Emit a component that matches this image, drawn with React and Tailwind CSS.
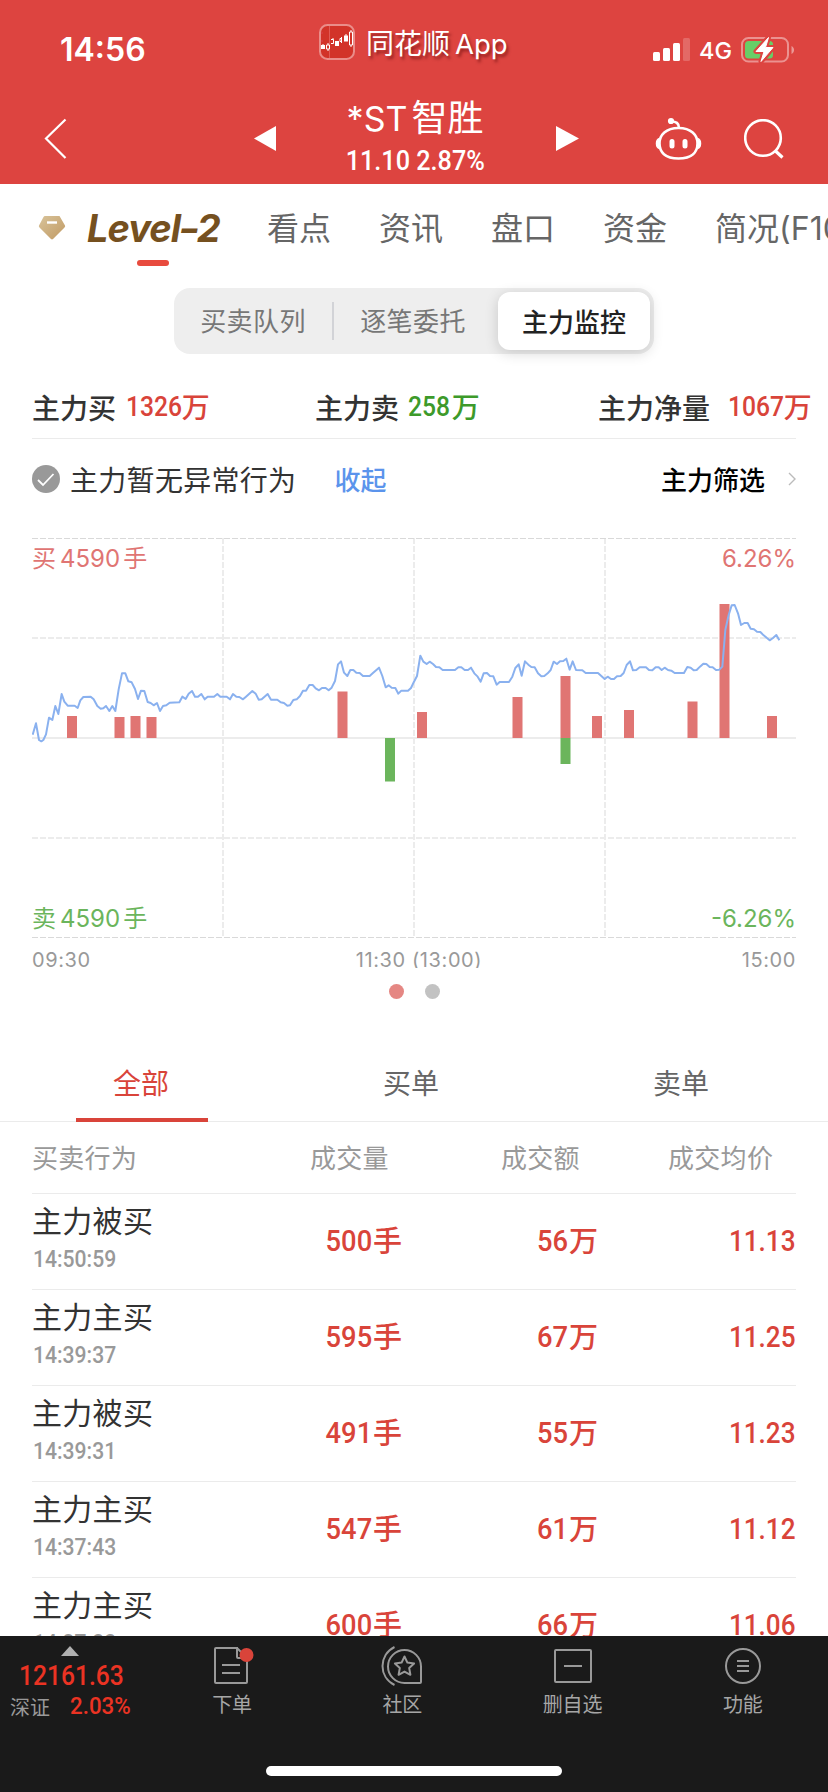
import React from 'react';

const stats = [
    { label: '主力买', value: '1326', color: 'text-[#d9443a]', gap: '-mr-2 ml-[10px]' },
    { label: '主力卖', value: '258', color: 'text-[#3d9a2a]', gap: '-mr-1 ml-[9px]' },
    { label: '主力净量', value: '1067', color: 'text-[#d9443a]', gap: '-mr-2 ml-[18px]' },
];

const orders = [
    { action: '主力被买', time: '14:50:59', volume: '500', amount: '56', price: '11.13' },
    { action: '主力主买', time: '14:39:37', volume: '595', amount: '67', price: '11.25' },
    { action: '主力被买', time: '14:39:31', volume: '491', amount: '55', price: '11.23' },
    { action: '主力主买', time: '14:37:43', volume: '547', amount: '61', price: '11.12' },
    { action: '主力主买', time: '14:37:22', volume: '600', amount: '66', price: '11.06' },
];

// x and height of each bar, in chart pixels
const buyBars = [
    [35, 22], [82.5, 21], [98.5, 22], [114.5, 21], [305.5, 46.5], [385, 26], [480.5, 41],
    [528.5, 62], [560, 22], [592, 28], [655.5, 36.5], [687.5, 134], [735, 22],
];
const sellBars = [[353, 43.5], [528.5, 26]];

// price curve, in thirds of a pixel
const priceLine =
    '98,404 108,370 117,420 124,424 130,420 138,403 147,353 157,360 166,318 175,342 185,282 193,305 203,317 224,317 233,324 241,301 250,291 272,290 281,298 292,318 302,326 310,325 318,318 328,333 337,318 346,333 356,268 366,220 376,220 385,244 395,247 405,267 414,297 423,272 433,273 443,306 452,309 461,316 471,309 480,333 489,318 499,316 509,308 538,307 547,290 557,297 566,281 576,273 585,290 594,290 604,282 614,298 623,290 642,290 652,282 661,290 680,290 690,298 699,282 709,290 718,291 729,298 738,290 757,273 767,281 776,299 785,298 803,282 813,299 832,299 842,307 852,309 862,317 870,316 880,300 890,298 900,288 909,272 918,272 928,255 938,255 947,265 957,271 966,264 977,264 986,271 995,263 1005,243 1014,193 1023,184 1032,218 1042,228 1051,210 1060,210 1069,218 1079,219 1089,228 1109,228 1118,220 1137,203 1147,228 1157,262 1166,256 1175,263 1186,264 1195,281 1204,272 1224,272 1233,264 1242,245 1251,228 1261,167 1270,185 1280,192 1289,185 1299,192 1308,201 1318,202 1328,210 1365,210 1375,202 1384,202 1394,210 1404,210 1413,203 1423,220 1433,230 1442,245 1451,220 1461,219 1470,228 1480,229 1490,254 1499,246 1527,246 1537,230 1546,204 1556,193 1565,227 1575,184 1585,194 1594,201 1604,202 1614,220 1624,229 1633,228 1643,220 1652,210 1661,185 1671,192 1680,184 1690,183 1699,176 1709,209 1718,184 1728,210 1747,211 1757,219 1794,219 1804,228 1814,237 1823,230 1833,237 1842,237 1851,229 1862,228 1871,219 1880,195 1890,184 1899,211 1909,210 1919,202 1938,202 1947,210 1957,211 1967,202 1976,202 1985,210 1994,203 2004,210 2014,212 2024,219 2052,219 2062,201 2072,203 2081,211 2090,210 2100,200 2110,191 2119,192 2129,201 2138,202 2148,210 2158,209 2167,200 2176,90 2186,45 2195,16 2204,15 2214,40 2223,75 2233,69 2243,69 2252,86 2262,88 2271,95 2281,96 2291,106 2309,121 2319,114 2329,105 2338,121';

const Num = ({ children, className = '' }) => (
    <span className={`inline-block font-['Roboto'] font-medium ${className}`}>{children}</span>
);

const StatusBar = () => (
    <div className="relative h-[84px]">
        <div className="flex h-[100px] items-center justify-between pl-[60px] pr-[33px]">
            <span className="font-['Inter'] text-[32px] font-semibold leading-none">14:56</span>
            <div className="flex items-center">
                <svg width="38" height="24" viewBox="0 0 38 24" fill="#fff">
                    <rect x="0" y="14" width="7" height="9" rx="1.5" />
                    <rect x="10" y="10" width="7" height="13" rx="1.5" />
                    <rect x="20" y="5" width="7" height="18" rx="1.5" />
                    <rect x="30" y="0" width="7" height="23" rx="1.5" opacity=".2" />
                </svg>
                <span className="ml-2 mt-0.5 font-['Inter'] text-[23.5px] font-medium leading-none">4G</span>
                <svg className="ml-[9px]" width="54" height="28" viewBox="0 0 54 28" fill="none">
                    <rect x="1" y="2" width="46" height="23.5" rx="6.5" stroke="#fff" strokeOpacity=".42" strokeWidth="2" />
                    <path d="M50.5 10c3.4 1.5 3.4 6.5 0 8z" fill="#fff" fillOpacity=".45" />
                    <rect x="4" y="5" width="28" height="17.5" rx="3.5" fill="#68ce67" />
                    <path d="M27.5 1.5 15 15.5h8L20 25.5 32 11.5h-7.5z" fill="#fff" stroke="#dd4440" strokeWidth="5" strokeLinejoin="round" />
                    <path d="M27.5 1.5 15 15.5h8L20 25.5 32 11.5h-7.5z" fill="#fff" stroke="#fff" strokeLinejoin="round" />
                </svg>
            </div>
        </div>
        <div className="absolute left-[319px] top-6 flex items-start">
            <svg width="36" height="36" viewBox="0 0 36 36">
                <rect x="1" y="1" width="34" height="34" rx="7.5" fill="#d23329" stroke="#ea8d89" strokeWidth="2" />
                <path d="M10.5 2v32" stroke="#e05a54" />
                <path d="M2.5 9h1M2.5 17h1" stroke="#e58" strokeWidth=".8" />
                <path d="M2 21h4v4H2zM16 17h4v5h-4zM25 11.5h4v6h-4z" fill="#fff" />
                <path d="M7.5 21h3v4h-3zM9 19v2M9 25v2M12 15.5h2.5v4H12M14 14v1.5M22.5 14.5H21v3h1.5M22.5 13v6M30.5 8h3v13h-3zM32 6v2M32 21v2M4 20v1M27 10v2" fill="none" stroke="#fff" />
            </svg>
            <span className="ml-[11px] mt-0.5 whitespace-nowrap font-['Inter','Noto_Sans_CJK_SC',sans-serif] text-[28px] leading-9 [text-shadow:2px_3px_3px_rgba(80,0,0,.5)]">
                同花顺<span className="ml-[5px] text-[27.5px]">App</span>
            </span>
        </div>
    </div>
);

const TitleBar = () => (
    <div className="flex h-[100px] items-start pt-5">
        <svg className="ml-11 mt-[14px]" width="24" height="42" viewBox="0 0 24 42" fill="none" stroke="#fff" strokeWidth="2.2">
            <path d="M21.5 1.5 2 20.5l19.5 19.5" />
        </svg>
        <svg className="ml-[186px] mt-[22px]" width="22" height="25" viewBox="0 0 22 25" fill="#fff">
            <path d="M22 0v25L0 12.5z" />
        </svg>
        <div className="flex w-[278px] flex-col items-center whitespace-nowrap">
            <div className="-mt-[5px] font-['Inter','Noto_Sans_CJK_SC',sans-serif] text-[34px] leading-[38px]">
                *ST<span className="ml-1 text-[36px]">智胜</span>
            </div>
            <Num className="mt-[5px] scale-x-[0.9] text-[28px] leading-9">11.10 2.87%</Num>
        </div>
        <svg className="ml-0.5 mt-[22px]" width="23" height="25" viewBox="0 0 23 25" fill="#fff">
            <path d="M0 0v25l23-12.5z" />
        </svg>
        <svg className="ml-[76px] mt-[13px]" width="48" height="44" viewBox="0 0 48 44" fill="none" stroke="#fff" strokeWidth="2.6">
            <path d="M23.500 11C36 11 42.500 18 42.500 26.500S37 41.500 23.500 41.500 4.500 35 4.500 26.500 11 11 23.500 11z" />
            <path d="M4.500 21.500c-4 1-4 9 0 10M42.500 21.500c4 1 4 9 0 10" fill="#fff" strokeWidth="1.500" />
            <path d="M24 11c0-5-3-6.5-7.5-6.5" />
            <circle cx="16" cy="4" r="1.8" fill="#fff" />
            <path d="M17 24.500v4.5M30 24.500v4.5" strokeWidth="5" strokeLinecap="round" />
        </svg>
        <svg className="ml-[41px] mt-[15px]" width="40" height="41" viewBox="0 0 40 41" fill="none" stroke="#fff" strokeWidth="2.6">
            <circle cx="19" cy="19" r="17.8" />
            <path d="m31.5 32 7 6.5" strokeWidth="3.2" />
        </svg>
    </div>
);

const TopTabs = () => (
    <div className="relative flex h-[104px] items-start overflow-hidden whitespace-nowrap pl-[36px] pt-[21px]">
        <svg className="mt-[8px] shrink-0" width="34" height="34" viewBox="0 0 34 34">
            <defs>
                <linearGradient id="gem" x1="0" y1="0" x2="1" y2="1">
                    <stop offset="0" stopColor="#d8c39a" />
                    <stop offset="1" stopColor="#c19a63" />
                </linearGradient>
            </defs>
            <path d="M9 3h14.5l5.5 9.5q.5 1-.5 2L17 26q-1 .8-2 0L3.5 14.5q-1-1-.5-2L7.5 4Q8 3 9 3z" fill="url(#gem)" />
            <path d="M11 9.5h10" stroke="#fff" strokeWidth="2.4" />
        </svg>
        <span className="ml-[17px] w-[132px] shrink-0 origin-left font-['Inter'] text-[38px] font-bold italic leading-[46px] tracking-[-1px] text-[#75501f]">
            Level<span className="inline-block scale-x-[1.25]">-</span>2
        </span>
        <div className="ml-12 flex shrink-0 gap-12 font-['Inter','Noto_Sans_CJK_SC',sans-serif] text-[32px] leading-[48px] text-[#666]">
            <span>看点</span>
            <span>资讯</span>
            <span>盘口</span>
            <span>资金</span>
            <span>简况(F10)</span>
        </div>
        <div className="absolute left-[137px] top-[76px] h-1.5 w-8 rounded-[3px] bg-[#e84b3e]" />
    </div>
);

const Segment = () => (
    <div className="mx-auto flex h-[66px] w-[480px] items-center rounded-2xl bg-[#eeeeee] text-[26px] text-[#777]">
        <span className="w-[158px] pb-1 text-center tracking-[0.4px]">买卖队列</span>
        <span className="h-[38px] w-0.5 bg-[#d2d3d7]" />
        <span className="w-[158px] pb-1 text-center tracking-[0.4px]">逐笔委托</span>
        <span className="ml-1.5 flex h-[58px] w-[152px] items-center justify-center rounded-xl bg-white pb-0.5 font-medium text-[#222] shadow-[0_3px_14px_rgba(0,0,0,.16)]">
            主力监控
        </span>
    </div>
);

const Stats = () => (
    <div className="mx-8 flex h-[85px] items-center border-b border-[#ebebeb] pt-[22px] text-[28px]">
        {stats.map((s) => (
            <div key={s.label} className="flex w-[283px] shrink-0 items-center whitespace-nowrap">
                <span className="font-medium text-[#333]">{s.label}</span>
                <Num className={`mb-px origin-left scale-x-[0.88] ${s.gap} ${s.color}`}>{s.value}</Num>
                <span className={`mb-[3px] font-medium ${s.color}`}>万</span>
            </div>
        ))}
    </div>
);

const Chart = () => (
    <div className="relative mx-8 h-[400px] font-['Inter','Noto_Sans_CJK_SC',sans-serif] text-[24px] leading-[30px]">
        <svg className="block" width="764" height="402" viewBox="0 0 764 402" fill="none">
            <g stroke="#ececec" strokeWidth="2">
                <path d="M191 0v400M382 0v400M573 0v400M0 100h764M0 300h764" strokeDasharray="6 2" />
                <path d="M0 200h764" />
            </g>
            <path d="M0 .5h764M0 399.5h764" stroke="#d9d9d9" strokeDasharray="6 2" />
            {buyBars.map(([x, h]) => (
                <rect key={x} x={x} y={200 - h} width="10" height={h} fill="#e07573" />
            ))}
            {sellBars.map(([x, h]) => (
                <rect key={x} x={x} y="200" width="10" height={h} fill="#6bb55c" />
            ))}
            <g transform="translate(-32 62) scale(.33333)">
                <polyline points={priceLine} stroke="#8ab1ef" strokeWidth="6" strokeLinejoin="round" />
            </g>
        </svg>
        <div className="absolute inset-x-0 top-[6px] flex justify-between text-[#e07573]">
            <span>买<span className="ml-1 mr-[3px]">4590</span>手</span>
            <span>6.26%</span>
        </div>
        <div className="absolute inset-x-0 bottom-[4px] flex justify-between text-[#6bb55c]">
            <span>卖<span className="ml-1 mr-[3px]">4590</span>手</span>
            <span>-6.26%</span>
        </div>
    </div>
);

const OrderRow = ({ order }) => (
    <div className="flex h-24 shrink-0 border-b border-[#ebebeb]">
        <div className="w-[220px]">
            <div className="mt-[5px] text-[30px] leading-[40px] tracking-[0.3px] text-[#333]">{order.action}</div>
            <Num className="ml-px mt-1 origin-left scale-x-[0.88] align-top text-[24px] leading-[32px] text-[#999]">{order.time}</Num>
        </div>
        <div className="flex flex-1 items-center pb-1 text-[29px] font-medium text-[#d9443a]">
            <div className="flex w-[150px] items-center justify-end">
                <Num className="mt-px origin-right scale-x-[0.91] text-[30px]">{order.volume}</Num>
                <span className="ml-px">手</span>
            </div>
            <div className="flex w-[196px] items-center justify-end">
                <Num className="mt-px origin-right scale-x-[0.91] text-[30px]">{order.amount}</Num>
                <span className="ml-px">万</span>
            </div>
            <div className="flex flex-1 justify-end">
                <Num className="mt-px origin-right scale-x-[0.87] text-[30px]">{order.price}</Num>
            </div>
        </div>
    </div>
);

const NavItem = ({ label, children }) => (
    <div className="flex flex-1 flex-col items-center pt-2">
        <svg width="44" height="44" viewBox="0 0 44 44" fill="none" stroke="#999" strokeWidth="2">
            {children}
        </svg>
        <span className="mt-[1px] text-[20px] leading-[30px] text-[#a6a6a6]">{label}</span>
    </div>
);

const BottomBar = () => (
    <div className="h-[156px] shrink-0 bg-[#1a1a1a]">
        <div className="flex h-[130px]">
            <div className="w-[147px] text-[#eb3323]">
                <svg className="ml-[61px] mt-[10px] block" width="18" height="10" viewBox="0 0 18 10">
                    <path d="M9 0l9 10H0z" fill="#b0b0b0" />
                </svg>
                <Num className="ml-[19px] mt-[2px] block origin-left scale-x-[0.88] text-[28px] leading-9">12161.63</Num>
                <div className="-mt-1 flex items-center pl-[10px]">
                    <span className="mt-0.5 text-[20px] leading-[30px] text-[#999]">深证</span>
                    <Num className="ml-5 origin-left scale-x-[0.93] text-[24px] leading-8">2.03%</Num>
                </div>
            </div>
            <NavItem label="下单">
                <path d="M27 4H6q-1 0-1 1v33q0 1 1 1h30q1 0 1-1V14H28q-1 0-1-1zl10 10M12 21h18M12 29h18" />
                <circle cx="36.5" cy="11" r="7" fill="#d9443a" stroke="none" />
            </NavItem>
            <NavItem label="社区">
                <path d="M14.5 3c-16 8-16 30 0 38M41 22.5V38q0 1-1 1H24.5a16.5 16.5 0 1 1 16.5-16.5z" />
                <path d="m24.5 12.5 2.9 6.1 6.7.9-4.9 4.6 1.2 6.7-5.9-3.2-5.9 3.2 1.2-6.7-4.9-4.6 6.7-.9z" strokeLinejoin="round" />
            </NavItem>
            <NavItem label="删自选">
                <rect x="4" y="6" width="36" height="32" rx="1" />
                <path d="M13 22h18" />
            </NavItem>
            <NavItem label="功能">
                <circle cx="22" cy="22" r="17" />
                <path d="M16 17h12M16 22h12M16 27h12" />
            </NavItem>
        </div>
        <div className="mx-auto h-[10px] w-[296px] rounded-full bg-white" />
    </div>
);

const App = () => (
    <div className="flex h-[1792px] w-[828px] flex-col overflow-hidden bg-white font-['Noto_Sans_CJK_SC',sans-serif]">
        <header className="h-[184px] shrink-0 bg-[#dd4440] text-white">
            <StatusBar />
            <TitleBar />
        </header>
        <main className="min-h-0 flex-1 overflow-hidden">
            <TopTabs />
            <Segment />
            <Stats />
            <div className="mx-8 flex h-[99px] items-start pt-[19px] leading-[42px]">
                <svg className="mt-[7px]" width="28" height="28" viewBox="0 0 28 28" fill="none">
                    <circle cx="14" cy="14" r="14" fill="#999" />
                    <path d="m6 15 5 5L21.5 9" stroke="#fff" strokeWidth="1.8" />
                </svg>
                <span className="ml-[10px] text-[28px] tracking-[0.3px] text-[#333]">主力暂无异常行为</span>
                <span className="ml-[38px] text-[26px] font-medium text-[#5b94ec]">收起</span>
                <span className="ml-auto text-[26px] font-medium text-black">主力筛选</span>
                <svg className="ml-[23px] mt-[14px]" width="8" height="14" viewBox="0 0 8 14" fill="none" stroke="#bbb" strokeWidth="1.4">
                    <path d="m1 1 6 6-6 6" />
                </svg>
            </div>
            <Chart />
            <div className="mx-8 flex h-[30px] justify-between overflow-hidden pt-[10px] font-['Inter'] text-[20px] leading-6 tracking-[0.6px] text-[#999]">
                <span className="w-[100px]">09:30</span>
                <span className="pl-2.5">11:30 (13:00)</span>
                <span className="w-[100px] text-right">15:00</span>
            </div>
            <div className="mt-4 flex justify-center gap-[21px]">
                <span className="h-[15px] w-[15px] rounded-full bg-[#e58783]" />
                <span className="h-[15px] w-[15px] rounded-full bg-[#c2c2c2]" />
            </div>
            <div className="mt-[43px] flex h-[80px] border-b border-[#ebebeb] px-1.5 text-[28px] text-[#666]">
                <div className="relative w-[270px] pt-[19px] text-center text-[#d9443a]">
                    全部
                    <div className="absolute bottom-[-1px] left-[70px] h-1 w-[132px] bg-[#d9443a]" />
                </div>
                <div className="w-[270px] pt-[19px] text-center">买单</div>
                <div className="w-[270px] pt-[19px] text-center">卖单</div>
            </div>
            <div className="mx-8 flex h-[72px] items-center border-b border-[#ebebeb] pb-[3px] text-[26px] tracking-[0.3px] text-[#999]">
                <span className="w-[278px]">买卖行为</span>
                <span className="w-[191px]">成交量</span>
                <span className="w-[167px]">成交额</span>
                <span>成交均价</span>
            </div>
            <div className="mx-8">
                {orders.map((order) => (
                    <OrderRow key={order.time} order={order} />
                ))}
            </div>
        </main>
        <BottomBar />
    </div>
);

export default App;
